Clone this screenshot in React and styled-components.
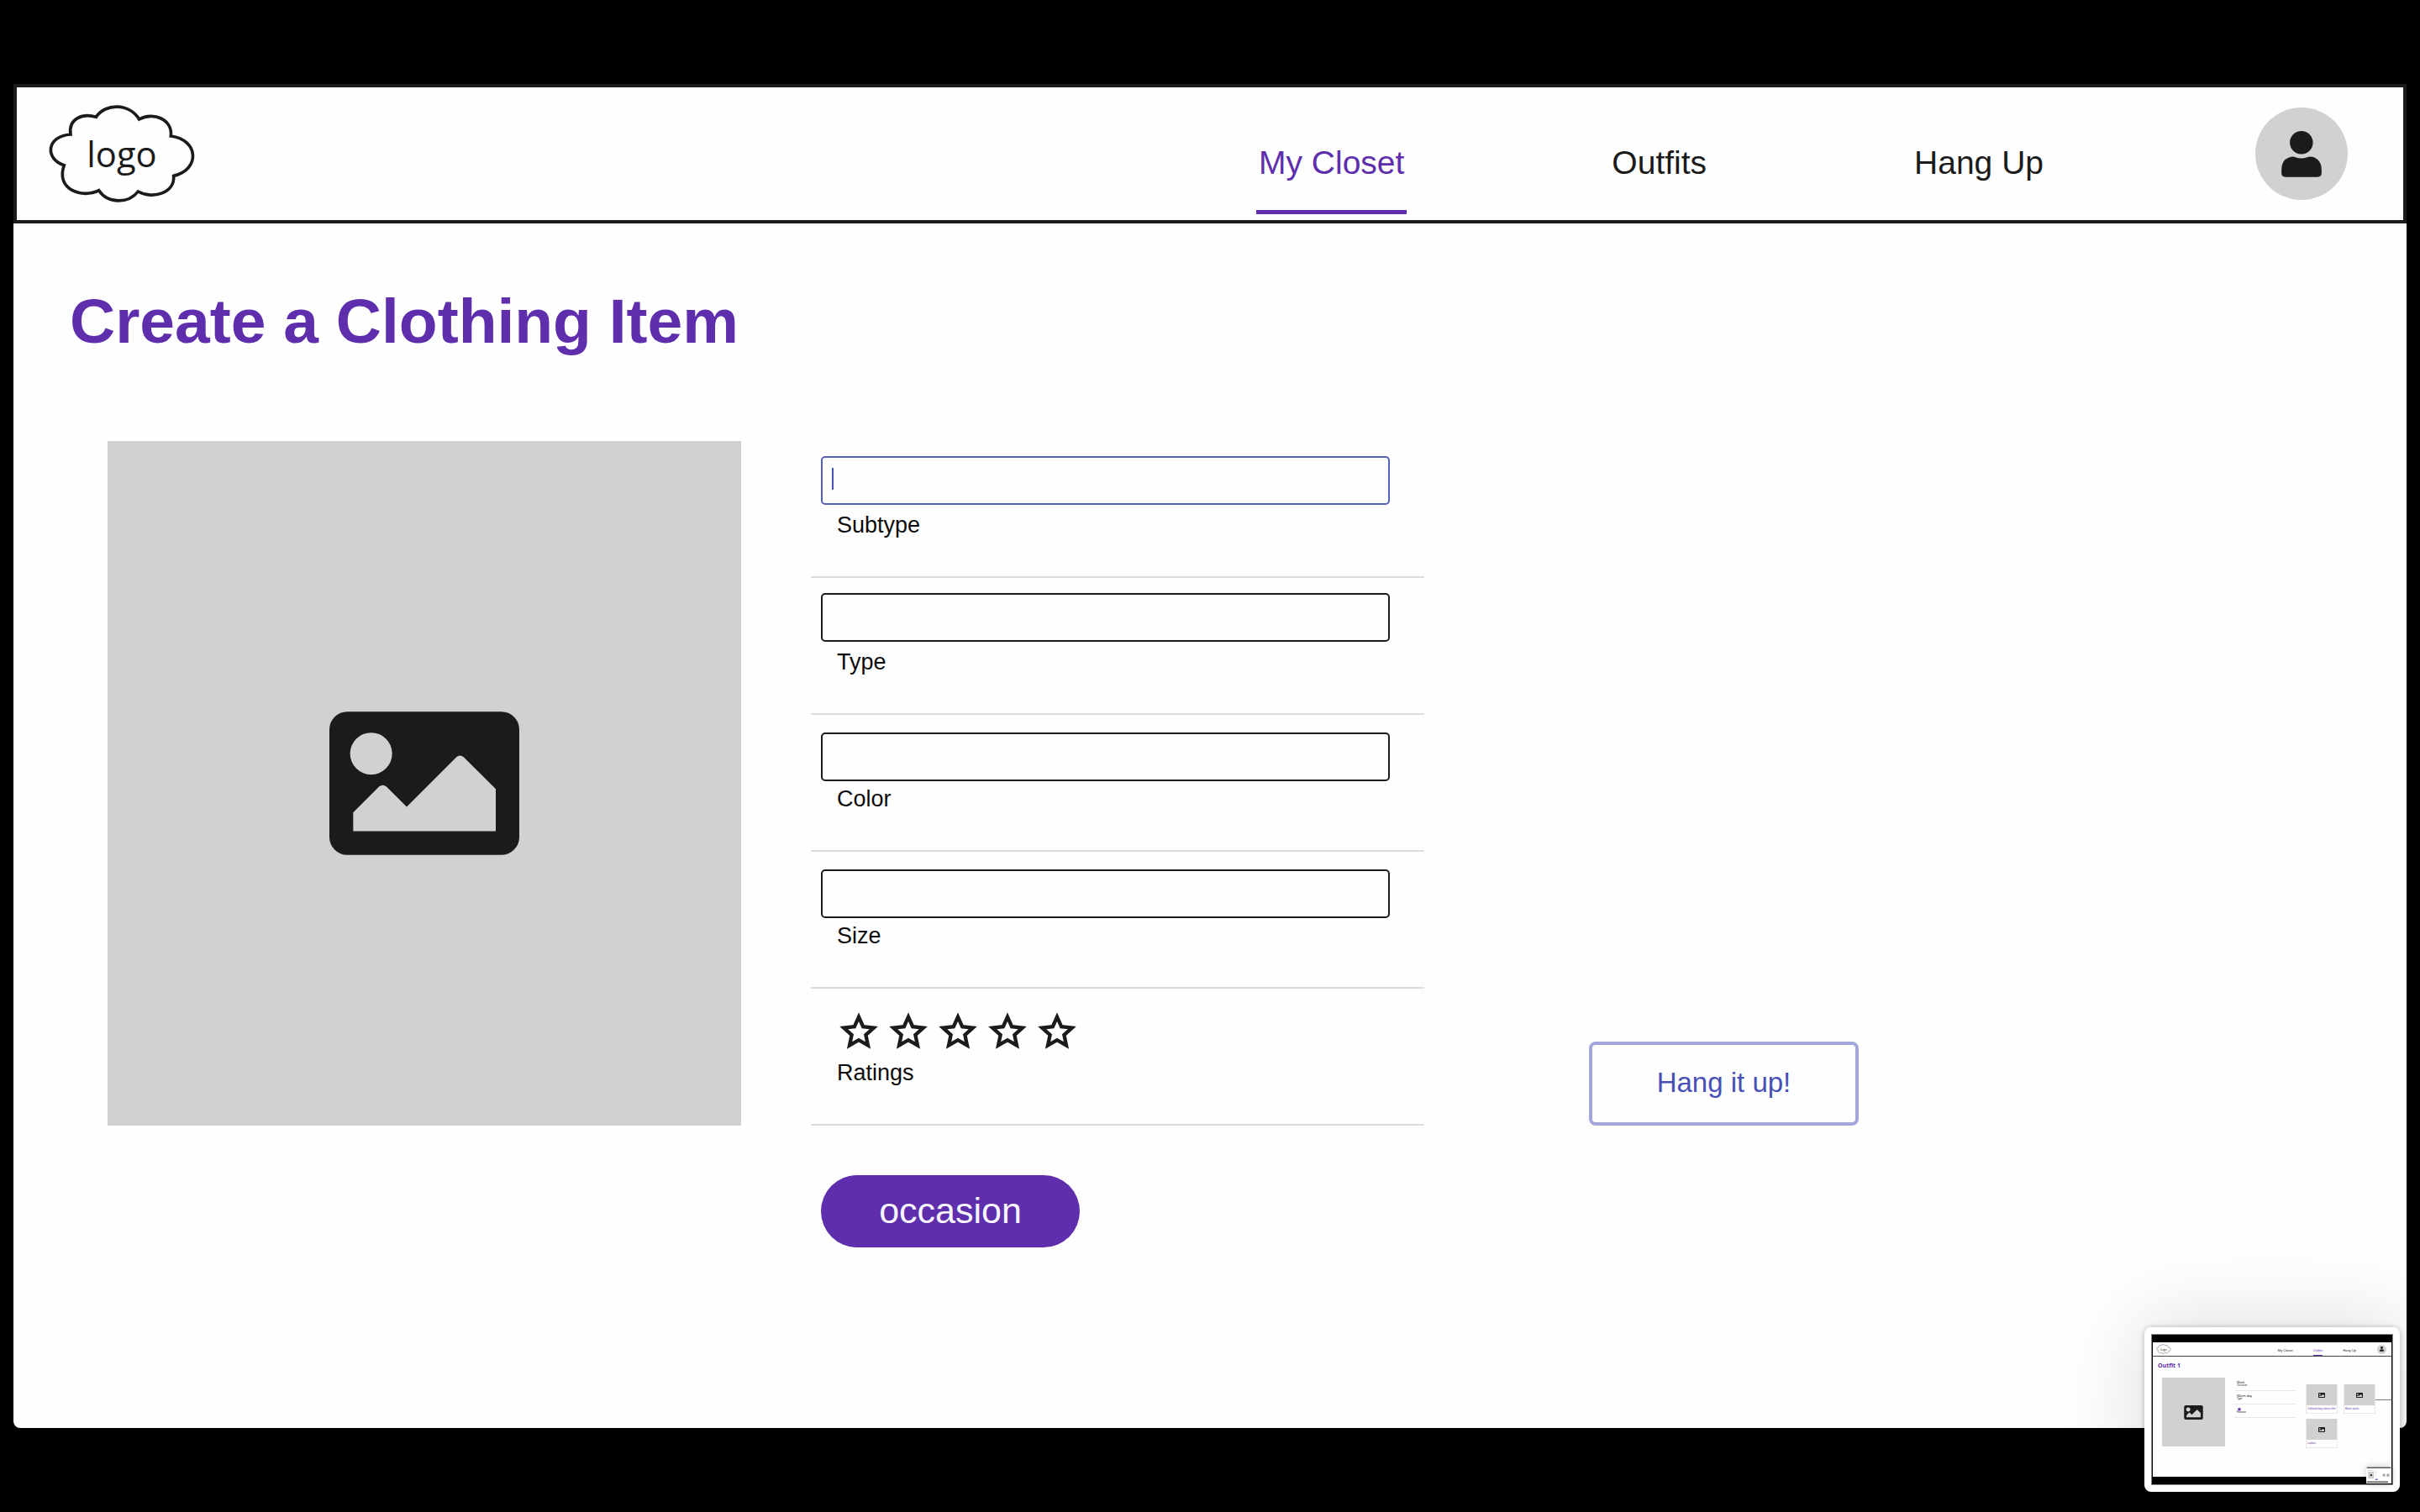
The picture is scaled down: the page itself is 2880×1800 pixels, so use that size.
import React, { useState } from "react";
import styled, { createGlobalStyle } from "styled-components";

const ink = "#1b1b1b";
const purple = "#5e2eac";
const indigo = "#4750b4";
const grey = "#d1d1d1";
const sans = '"Liberation Sans", Arial, Helvetica, sans-serif';

const GlobalStyle = createGlobalStyle`
  *, *::before, *::after { box-sizing: border-box; }
  body { margin: 0; background: #000; color: ${ink}; font-family: ${sans}; }
  button, input { font-family: inherit; }
`;

/* ---------- drawings ---------- */

const CloudLogo = ({ className }) => (
  <svg className={className} viewBox="48 33 540 372" role="img" aria-label="logo">
    <path
      d="M226 88C258 38 345 38 380 96C430 68 500 96 493 156C596 170 596 278 503 298C508 358 430 384 376 354C342 398 268 398 236 350C178 380 80 348 112 260C44 240 46 156 135 150C126 92 180 74 226 88Z"
      fill="none"
      stroke={ink}
      strokeWidth="11"
    />
    <text x="193" y="266" fontSize="125" fontFamily='"Open Sans", "Noto Sans", sans-serif' fill={ink}>
      logo
    </text>
  </svg>
);

const PersonIcon = ({ className }) => (
  <svg className={className} viewBox="225 196 144 166" fill={ink} aria-hidden="true">
    <circle cx="296.5" cy="237.5" r="41.5" />
    <path d="M225 334Q226 300 252 291Q265 286 276 290Q296 298 317 290Q332 286 345 292Q369 304 369 334V347Q369 361 355 361H239Q225 361 225 347Z" />
  </svg>
);

const PhotoIcon = ({ className }) => (
  <svg className={className} viewBox="153 142 678 512" aria-hidden="true">
    <rect x="153" y="142" width="678" height="512" rx="64" fill={ink} />
    <circle cx="302" cy="292" r="75" fill={grey} />
    <path
      d="M238 502L331 409Q343 400 356 409L429 482L606 305Q619 293 633 305L747 418V569H238Z"
      fill={grey}
    />
  </svg>
);

const starPoints =
  "69,17 84.5,51.6 122.3,55.7 94.1,81.2 101.9,118.3 69,99.4 36.1,118.3 43.9,81.2 15.7,55.7 53.5,51.6";

const StarIcon = ({ className, color = ink, fill = "none" }) => (
  <svg className={className} viewBox="0 0 138 132" aria-hidden="true">
    <polygon points={starPoints} fill={fill} stroke={color} strokeWidth="13" strokeMiterlimit="8" />
  </svg>
);

/* ---------- page ---------- */

const Page = styled.div`
  display: flex;
  flex-direction: column;
  min-height: calc(100vh - 200px);
  margin: 100px 16px;
  background: #fefefe;
  border-radius: 0 0 8px 8px;
`;

const Header = styled.header`
  display: flex;
  align-items: center;
  padding: 17px 66px 17px 35px;
  border: 4px solid ${ink};
`;

const HomeLink = styled.a`
  display: block;
  margin-right: auto;
`;

const Logo = styled(CloudLogo)`
  display: block;
  width: 180px;
  height: 124px;
`;

const Nav = styled.nav`
  display: flex;
  align-self: flex-end;
  gap: 241px;
  margin: 0 249px -10px 0;
`;

const NavLink = styled.a`
  padding: 0 3px 33px;
  border-bottom: 5px solid ${(p) => (p.$active ? purple : "transparent")};
  color: ${(p) => (p.$active ? purple : ink)};
  font-size: 39px;
  line-height: 46px;
  text-decoration: none;
  white-space: nowrap;
`;

const Avatar = styled.button`
  display: grid;
  place-items: center;
  flex: none;
  width: 110px;
  height: 110px;
  padding: 0;
  border: 0;
  border-radius: 50%;
  background: ${grey};
`;

const AvatarIcon = styled(PersonIcon)`
  width: 48px;
  height: 55px;
`;

const Main = styled.main`
  flex: 1;
  padding: 73px 67px;
`;

const Title = styled.h1`
  margin: 0 0 100px;
  color: ${purple};
  font-size: 75px;
  font-weight: 700;
  line-height: 86px;
`;

const Editor = styled.form`
  display: grid;
  grid-template-columns: minmax(0, 754px) minmax(0, 730px) auto;
  justify-content: start;
  column-gap: 83px;
  padding-left: 45px;
`;

const Photo = styled.button`
  display: grid;
  place-items: center;
  padding: 0;
  border: 0;
  background: ${grey};
`;

const PhotoGlyph = styled(PhotoIcon)`
  width: 226px;
  height: 171px;
`;

const Fields = styled.div`
  display: flex;
  flex-direction: column;
`;

const Field = styled.div`
  display: flex;
  flex-direction: column;
  justify-content: space-between;
  height: 163px;
  padding: ${(p) => p.$top}px 41px 45px 12px;
  border-bottom: 2px solid #dcdcdc;
`;

const TextInput = styled.input`
  width: 100%;
  height: 58px;
  padding: 0 11px;
  border: 2px solid ${(p) => (p.$active ? "#5560b8" : ink)};
  border-radius: 5px;
  outline: none;
  background: ${(p) =>
    p.$active ? `linear-gradient(${indigo}, ${indigo}) 11px 12px / 2px 26px no-repeat` : "transparent"};
  font-size: 27px;
`;

const FieldLabel = styled.label`
  margin-left: 19px;
  color: #0c0c0c;
  font-size: 27px;
  line-height: 32px;
`;

const Stars = styled.div`
  display: flex;
  gap: 13px;
  margin-left: 22px;
`;

const StarChoice = styled.label`
  position: relative;
  width: 46px;
  height: 44px;
`;

const StarInput = styled.input`
  position: absolute;
  inset: 0;
  margin: 0;
  opacity: 0;
`;

const Star = styled(StarIcon)`
  display: block;
  width: 46px;
  height: 44px;
`;

const SubmitArea = styled.div`
  display: flex;
  align-items: flex-end;
  padding-left: 113px;
`;

const HangButton = styled.button`
  width: 321px;
  height: 100px;
  padding: 0 0 2px;
  border: 4px solid #a2a7da;
  border-radius: 8px;
  background: transparent;
  color: ${indigo};
  font-size: 33px;
`;

const OccasionButton = styled.button`
  grid-column: 2;
  justify-self: start;
  width: 308px;
  height: 86px;
  margin: 59px 0 0 12px;
  padding: 0 0 2px;
  border: 0;
  border-radius: 43px;
  background: ${purple};
  color: #f8f5fc;
  font-size: 43px;
`;

/* ---------- floating preview of the previous screen ---------- */

const Preview = styled.aside`
  position: fixed;
  right: 24px;
  bottom: 24px;
  width: 304px;
  padding: 8px;
  border-radius: 8px;
  background: #fff;
  box-shadow: 0 0 6px rgba(0, 0, 0, 0.25), 0 0 100px rgba(0, 0, 0, 0.15);
`;

const Screen = styled.div`
  position: relative;
  height: 180px;
  padding: 9px 1px;
  border: 1px solid #8a8a8a;
  background: #000;
`;

const MiniPage = styled.div`
  height: 160px;
  background: #fefefe;
`;

const MiniHeader = styled.div`
  display: flex;
  align-items: center;
  height: 17px;
  padding: 0 6px 0 4px;
  border-bottom: 1px solid #444;
`;

const MiniLogo = styled(CloudLogo)`
  width: 18px;
  height: 12px;
  margin-right: auto;
`;

const MiniNav = styled.div`
  display: flex;
  align-self: flex-end;
  gap: 24px;
  margin-right: 25px;
`;

const MiniNavItem = styled.span`
  padding-bottom: 3px;
  border-bottom: 1px solid ${(p) => (p.$active ? purple : "transparent")};
  color: ${(p) => (p.$active ? purple : ink)};
  font-size: 4px;
  line-height: 5px;
`;

const MiniAvatar = styled.div`
  display: grid;
  place-items: center;
  width: 11px;
  height: 11px;
  border-radius: 50%;
  background: ${grey};
`;

const MiniPerson = styled(PersonIcon)`
  width: 5px;
  height: 6px;
`;

const MiniTitle = styled.div`
  padding: 6px 0 9px 6px;
  color: ${purple};
  font: 700 7px/10px "Open Sans", "Noto Sans", sans-serif;
`;

const MiniBody = styled.div`
  display: grid;
  grid-template-columns: 75px 74px 84px 1fr;
  column-gap: 11px;
  align-items: start;
  padding-left: 11px;
`;

const MiniPhoto = styled.div`
  display: grid;
  place-items: center;
  height: ${(p) => p.$height}px;
  background: ${grey};
`;

const MiniGlyph = styled(PhotoIcon)`
  width: ${(p) => (p.$large ? 23 : 8)}px;
  height: ${(p) => (p.$large ? 17 : 6)}px;
`;

const MiniRow = styled.div`
  display: flex;
  flex-direction: column;
  justify-content: flex-end;
  height: 16px;
  padding: 0 3px 4px;
  border-bottom: 1px solid #e8e8e8;
  font-size: 3px;
  line-height: 3px;
`;

const MiniValue = styled.span`
  font-size: 4px;
  line-height: 4px;
`;

const MiniStar = styled(StarIcon)`
  width: 6px;
  height: 5px;
`;

const MiniCards = styled.div`
  display: grid;
  grid-template-columns: 38px 38px;
  gap: 6px 7px;
  padding-top: 8px;
`;

const MiniCard = styled.div`
  height: 35px;
  border: 1px solid #e8e8e8;
  border-top: 0;
  color: ${purple};
  font-size: 3px;
  line-height: 8px;
  white-space: nowrap;
`;

const MiniCaption = styled.div`
  padding-left: 1px;
`;

const MiniRule = styled.div`
  height: 1px;
  margin: 26px 0 0 -12px;
  background: #777;
`;

const NestedPreview = styled.svg`
  position: absolute;
  right: 1px;
  bottom: 1px;
  width: 30px;
  height: 20px;
  box-shadow: 0 0 8px rgba(0, 0, 0, 0.2);
`;

const pages = ["My Closet", "Outfits", "Hang Up"];

const fields = [
  { id: "subtype", label: "Subtype", top: 18, active: true },
  { id: "type", label: "Type", top: 18 },
  { id: "color", label: "Color", top: 21 },
  { id: "size", label: "Size", top: 21 },
];

const outfitPieces = ["Collared long sleeve shirt", "Black slacks", "Loafers"];

function OutfitPreview() {
  return (
    <Preview aria-label="Outfit 1 preview">
      <Screen>
        <MiniPage>
          <MiniHeader>
            <MiniLogo />
            <MiniNav>
              {pages.map((name) => (
                <MiniNavItem key={name} $active={name === "Outfits"}>
                  {name}
                </MiniNavItem>
              ))}
            </MiniNav>
            <MiniAvatar>
              <MiniPerson />
            </MiniAvatar>
          </MiniHeader>
          <MiniTitle>Outfit 1</MiniTitle>
          <MiniBody>
            <MiniPhoto $height={82}>
              <MiniGlyph $large />
            </MiniPhoto>
            <div>
              <MiniRow>
                <MiniValue>Work</MiniValue>
                Occasion
              </MiniRow>
              <MiniRow>
                <MiniValue>Warm day</MiniValue>
                Type
              </MiniRow>
              <MiniRow>
                <MiniStar color={purple} fill={purple} />
                Favorite
              </MiniRow>
            </div>
            <MiniCards>
              {outfitPieces.map((name) => (
                <MiniCard key={name}>
                  <MiniPhoto $height={25}>
                    <MiniGlyph />
                  </MiniPhoto>
                  <MiniCaption>{name}</MiniCaption>
                </MiniCard>
              ))}
            </MiniCards>
            <MiniRule />
          </MiniBody>
        </MiniPage>
        <NestedPreview viewBox="0 0 90 60" aria-hidden="true">
          <rect width="90" height="60" fill="#fff" />
          <rect x="2" y="2" width="86" height="3" fill="#000" />
          <rect x="4" y="12" width="28" height="1" fill="#b9a3dc" />
          <rect x="6" y="18" width="22" height="25" fill={grey} />
          <rect x="14" y="28" width="7" height="5" fill={ink} />
          <path d="M34 19V40M34 19H44" stroke="#bbb" fill="none" />
          <rect x="58" y="25" width="11" height="11" fill="#ccc" />
          <rect x="72" y="25" width="11" height="11" fill="#ccc" />
          <rect x="61" y="29" width="5" height="3" fill="#666" />
          <rect x="75" y="29" width="5" height="3" fill="#666" />
          <rect x="32" y="44" width="10" height="3" fill={purple} />
          <rect x="2" y="53" width="76" height="3" fill="#000" />
        </NestedPreview>
      </Screen>
    </Preview>
  );
}

export default function App() {
  const [rating, setRating] = useState(0);

  return (
    <>
      <GlobalStyle />
      <Page>
        <Header>
          <HomeLink href="#home">
            <Logo />
          </HomeLink>
          <Nav>
            {pages.map((name) => (
              <NavLink key={name} href="#" $active={name === "My Closet"}>
                {name}
              </NavLink>
            ))}
          </Nav>
          <Avatar type="button" aria-label="Account">
            <AvatarIcon />
          </Avatar>
        </Header>
        <Main>
          <Title>Create a Clothing Item</Title>
          <Editor onSubmit={(e) => e.preventDefault()}>
            <Photo type="button" aria-label="Add a photo">
              <PhotoGlyph />
            </Photo>
            <Fields>
              {fields.map(({ id, label, top, active }) => (
                <Field key={id} $top={top}>
                  <TextInput id={id} type="text" $active={active} />
                  <FieldLabel htmlFor={id}>{label}</FieldLabel>
                </Field>
              ))}
              <Field $top={28} role="radiogroup" aria-labelledby="ratings">
                <Stars>
                  {[1, 2, 3, 4, 5].map((n) => (
                    <StarChoice key={n}>
                      <StarInput
                        type="radio"
                        name="rating"
                        aria-label={`${n} of 5`}
                        checked={rating === n}
                        onChange={() => setRating(n)}
                      />
                      <Star fill={n <= rating ? ink : "none"} />
                    </StarChoice>
                  ))}
                </Stars>
                <FieldLabel as="span" id="ratings">
                  Ratings
                </FieldLabel>
              </Field>
            </Fields>
            <SubmitArea>
              <HangButton type="submit">Hang it up!</HangButton>
            </SubmitArea>
            <OccasionButton type="button">occasion</OccasionButton>
          </Editor>
        </Main>
      </Page>
      <OutfitPreview />
    </>
  );
}
